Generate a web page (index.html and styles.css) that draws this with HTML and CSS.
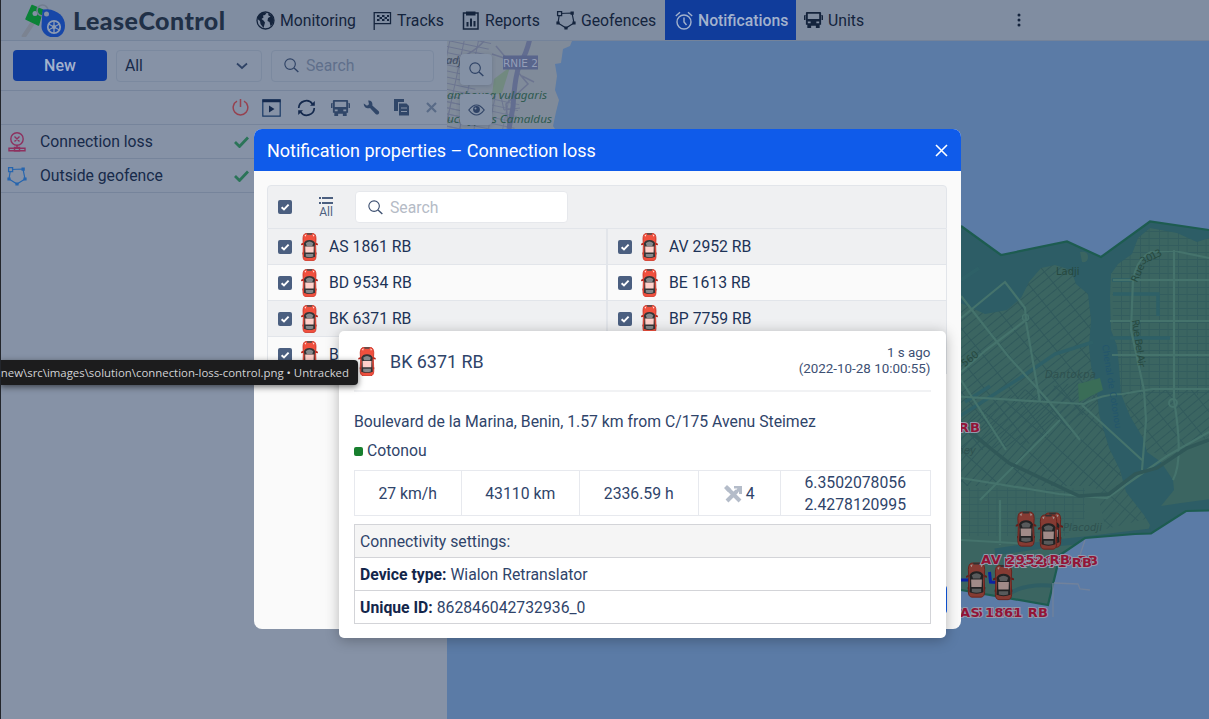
FILE: index.html
```html
<!DOCTYPE html>
<html lang="en">
<head>
<meta charset="utf-8">
<title>LeaseControl</title>
<link rel="stylesheet" href="styles.css">
</head>
<body>
<svg class="defs" width="0" height="0">
  <defs>
    <symbol id="car" viewBox="0 0 18 30">
      <path d="M0 11.5l3-1.5v2.500l-3 .5zM18 11.500l-3-1.500v2.500l3 .5z" fill="#b3261d"/>
      <path d="M1.500 21h15v2h-15z" fill="#8a2019"/>
      <path d="M2 6Q2.200 .8 5 .5h8Q15.800 .8 16 6l-.4 7L16 25q-.2 4.500-3 4.700H5Q2.200 29.500 2 25l.4-12z" fill="#f0503e" stroke="#c5281b" stroke-width=".8"/>
      <path d="M6 .3h6l-.6 1.500H6.600z" fill="#4b4b4b"/>
      <path d="M3.600 2.500l2-1-.6 2.500zM14.400 2.500l-2-1 .6 2.500z" fill="#ffd9d3"/>
      <path d="M3 11q1.500-3.500 6-3.500T15 11l-.6 4.500.6 10q-6 2.500-12 0l.6-10z" fill="#333436"/>
      <path d="M5 11q4-3.600 8 0l-1 2.800H6z" fill="#85888b"/>
      <path d="M4.400 14.500h9.200l-.2 6.500H4.600z" fill="#ffd0ca"/>
      <path d="M5 22.500h8v2.800q-4 1.300-8 0z" fill="#85888b"/>
    </symbol>
    <symbol id="check" viewBox="0 0 14 14">
      <rect width="14" height="14" rx="2" fill="#4b5f80"/>
      <path d="M3.600 7.200l2.400 2.300 4.600-4.800" fill="none" stroke="#fff" stroke-width="1.900"/>
    </symbol>
    <symbol id="search" viewBox="0 0 16 16">
      <circle cx="6.500" cy="6.500" r="5.600" fill="none" stroke="currentColor" stroke-width="1.200"/>
      <path d="M10.700 10.700l4.600 4.300" stroke="currentColor" stroke-width="1.400"/>
    </symbol>
    <symbol id="bus" viewBox="0 0 20 18">
      <path fill-rule="evenodd" fill="currentColor" d="M3 .5h14q1 0 1 1V4h2v5h-1.500V4.500H18V14h-1.500v3.500h-4V15h-5v2.500h-4V14H2V4.500h-.5V9H0V4h2V1.500q0-1 1-1zM4 2.500V8h12V2.500zM4 10.500v2h3v-2zM13 10.500v2h3v-2z"/>
    </symbol>
    <symbol id="fence" viewBox="0 0 20 20">
      <path d="M3.500 3.500L16 3l2 10-8 5-8-5z" fill="none" stroke="currentColor" stroke-width="1.200"/>
      <path d="M14.500 1.500h3.300v3.300h-3.300zM16.400 11.400h3.200v3.200h-3.200zM8.400 16.400h3.200v3.200H8.400zM.4 11.400h3.200v3.200H.4z" fill="currentColor"/>
      <path d="M1.600 1.600h4v4h-4z" class="fence-knot" stroke="currentColor" stroke-width="1.300"/>
    </symbol>
    <symbol id="tick" viewBox="0 0 15 12">
      <path d="M1 6l4.500 4.500L14 1.500" fill="none" stroke="#2b7458" stroke-width="2.800"/>
    </symbol>
  </defs>
</svg>

<div class="app">
  <header class="topbar">
    <div class="brand">
      <svg class="brand-mark" width="46" height="34" viewBox="20 2 46 34">
        <path d="M34 20L24 35" stroke="#7b8391" stroke-width="4.500" stroke-linecap="round"/>
        <path d="M32 4.500l10.500 4.500-4 15L26 18z" fill="#0b8237" stroke="#0b8237" stroke-width="1.500" stroke-linejoin="round"/>
        <circle cx="35" cy="12.500" r="2.500" fill="#8390a4"/>
        <circle cx="42.500" cy="9.500" r="5.500" fill="none" stroke="#727d90" stroke-width="1.500"/>
        <path d="M42.500 8.500l5-.2c10 1 17.500 7 17.500 16.200 0 8-5.500 12-11 12-7 0-12.500-5-12.500-11z" fill="#1747a8"/>
        <circle cx="46.500" cy="13" r="2.500" fill="#8390a4"/>
        <circle cx="54" cy="26" r="6.200" fill="none" stroke="#8d9bb2" stroke-width="1.800"/>
        <path d="M54 20v12M48.500 23l11 6M48.500 29l11-6" stroke="#8d9bb2" stroke-width="1.300"/>
        <circle cx="54" cy="26" r="2" fill="#8d9bb2"/>
      </svg>
      <span class="brand-name">LeaseControl</span>
    </div>
    <nav class="nav">
      <a class="nav-item"><svg width="19" height="19" viewBox="0 0 19 19"><circle cx="9.500" cy="9.500" r="8.500" fill="none" stroke="currentColor" stroke-width="1.300"/><path d="M2 5l4-3.500 4.500.5-1.500 2-2 .5.500 2-2 1.500 2 1.500 1.500 2-1.500 5.500-3-4-.5-3L1.500 8zM12 2l4 2.500 2 4.500-1.500 4.500-2 1.500-1-4-2-1 .5-3 2.500-1.500-2-1z" fill="currentColor"/></svg>Monitoring</a>
      <a class="nav-item"><svg width="19" height="19" viewBox="0 0 19 19"><path d="M1.200 1v18M1 1.600h16.500v11H1" fill="none" stroke="currentColor" stroke-width="1.300"/><path d="M4 4h2.500v2H4zM9 4h2.500v2H9zM14 4h2v2h-2zM6.500 6H9v2H6.500zM11.500 6H14v2h-2.500zM4 8h2.500v2H4zM9 8h2.500v2H9zM14 8h2v2h-2z" fill="currentColor"/></svg>Tracks</a>
      <a class="nav-item"><svg width="18" height="19" viewBox="0 0 18 19"><path d="M1.500 2h14.500v16H1.500z" fill="none" stroke="currentColor" stroke-width="1.500"/><path d="M4 .5h9.500v4H4zM4.500 11h2v4.500h-2zM8 7.500h2v8H8zM11.500 10h2v5.500h-2z" fill="currentColor"/></svg>Reports</a>
      <a class="nav-item"><svg width="20" height="20"><use href="#fence"/></svg>Geofences</a>
      <a class="nav-item nav-item-active"><svg width="18" height="19" viewBox="0 0 18 19" fill="none" stroke="currentColor" stroke-width="1.400"><circle cx="9" cy="11" r="7"/><path d="M9 6.500V11l2.500 3M.8 5L5 1.200M17.200 5L13 1.200"/></svg>Notifications</a>
      <a class="nav-item nav-item-units"><svg width="19" height="18"><use href="#bus"/></svg>Units</a>
    </nav>
    <svg class="more" width="4" height="14" viewBox="0 0 4 14" fill="#14243d"><circle cx="2" cy="2" r="1.500"/><circle cx="2" cy="7" r="1.500"/><circle cx="2" cy="12" r="1.500"/></svg>
  </header>

  <main class="main">
    <aside class="sidebar">
      <div class="filters">
        <button class="btn-new">New</button>
        <div class="select">All<svg width="12" height="8" viewBox="0 0 12 8"><path d="M1 1.500l5 4.500 5-4.500" fill="none" stroke="#2e4265" stroke-width="1.700"/></svg></div>
        <div class="search search-dim"><svg width="15" height="15"><use href="#search"/></svg>Search</div>
      </div>
      <div class="tools">
        <svg width="17" height="17" viewBox="0 0 17 17" fill="none" stroke="#96414f" stroke-width="1.500"><path d="M5 2.200a7.300 7.300 0 1 0 7 0M8.500 0v8"/></svg>
        <svg width="19" height="18" viewBox="0 0 19 18"><path d="M.8.800h17.400v16.400H.800z" fill="none" stroke="#1a3a66" stroke-width="1.200"/><path d="M.5.500h18v2.700H.5zM7 6.500l5.500 3.500L7 13.500z" fill="#14294d"/></svg>
        <svg width="19" height="18" viewBox="0 0 19 18"><path d="M1.700 9A7.600 7.600 0 0 1 15.500 5M17.300 9A7.600 7.600 0 0 1 3.500 13" fill="none" stroke="#14294d" stroke-width="1.700"/><path d="M17.800 2v4.800H13zM1.200 16v-4.800H6z" fill="#14294d"/></svg>
        <svg width="19" height="18" color="#304668"><use href="#bus"/></svg>
        <svg width="17" height="17" viewBox="0 0 17 17"><path d="M.8 4.500L4 6.800l2-1.500L5.200 1.500C8 1 10 3.500 9.300 6.500l6.200 5.500c2 2-.9 4.900-2.900 2.900L7 9C4 10 .5 8 .8 4.500z" fill="#304668"/></svg>
        <svg width="16" height="17" viewBox="0 0 16 17"><path d="M0 0h10v3H4v9H0z" fill="#304668"/><path d="M5 4.500h7.500l2.500 2.500v9.500H5z" fill="#304668"/><path d="M7 9h6M7 12.500h6" stroke="#8692a6"/></svg>
        <svg width="11" height="11" viewBox="0 0 11 11"><path d="M1 1l9 9M10 1l-9 9" stroke="#596b87" stroke-width="2.200"/></svg>
      </div>
      <div class="notice"><svg width="18" height="20" viewBox="0 0 18 20" fill="none" stroke="#8d315f" stroke-width="1.400"><circle cx="9" cy="7" r="6.200"/><path d="M6.500 4.500l5 5M11.500 4.500l-5 5M9 13v3M1 16.200h16v2.600H1zM6.500 15.500h5v3.500h-5z"/></svg><span>Connection loss</span><svg width="15" height="12"><use href="#tick"/></svg></div>
      <div class="notice"><svg width="20" height="20" color="#2665ae"><use href="#fence"/></svg><span>Outside geofence</span><svg width="15" height="12"><use href="#tick"/></svg></div>
    </aside>

    <section class="map">
      <svg class="map-canvas" width="762" height="678" viewBox="447 41 762 678">
        <defs>
          <pattern id="blocksA" width="20" height="7" patternUnits="userSpaceOnUse" patternTransform="rotate(-39)"><path d="M0 .5h20M.5 0v7" stroke="#30595b" stroke-width="1.100"/></pattern>
          <pattern id="blocksB" width="19" height="7" patternUnits="userSpaceOnUse"><path d="M0 .5h19M.5 0v7M9 0v7" stroke="#325c5d" stroke-width=".9"/></pattern>
          <pattern id="blocksC" width="22" height="7" patternUnits="userSpaceOnUse" patternTransform="rotate(-48)"><path d="M0 .5h22M.5 0v7" stroke="#30595b" stroke-width="1.100"/></pattern>
          <pattern id="blocksD" width="14" height="6" patternUnits="userSpaceOnUse" patternTransform="rotate(12)"><path d="M0 .5h14M.5 0v6" stroke="#6c7590" stroke-width="1.100"/></pattern>
          <clipPath id="zone"><path d="M940 210L961 226l40 29 66-13.500 34 15.500 49-35.500 59 8.500v280.500l-23 .5-35 22.500-16 .5-50 4-25 17-12 50-87-15-40-7z"/></clipPath>
        </defs>
        <rect x="447" y="41" width="762" height="678" fill="#5b7ba6"/>
        <path d="M447 41h125l-2 5-7 3-2 14-6 1 2 12-2 14 4 10-3 12-3 14 4 6H447z" fill="#808b9a"/>
        <path d="M447 41h45l-10 25-20 70h-15z" fill="url(#blocksD)"/>
        <path d="M447 96h74l-8 40h-66z" fill="url(#blocksD)" opacity=".8"/>
        <path d="M508 70l-8 22 4 18 16-2" fill="none" stroke="#6c7590"/>
        <path d="M494 79l16-12-8 26-10 2z" fill="#71897f"/>
        <path d="M484 41c-10 12-25 18-37 22M492 54l18 6 18-2M496 46l32 38-22 20 3 30M522 76l12 6" fill="none" stroke="#6c7590" stroke-width="1.500"/>
        <path d="M530 38q-3 14-9 24t-8 45l-4 22" fill="none" stroke="#626d90" stroke-width="5"/>
        <rect x="503" y="55.500" width="35" height="14" fill="#59658c"/>
        <text x="520.500" y="66.500" text-anchor="middle" class="road-badge">RNIE 2</text>
        <g class="place-green"><text x="447" y="99" textLength="100" lengthAdjust="spacingAndGlyphs">ambousa vulagaris</text><text x="447" y="123" textLength="105" lengthAdjust="spacingAndGlyphs">uca yptus Camaldus</text></g>
        <text x="446" y="64" class="place-dark">adje</text>

        <g clip-path="url(#zone)">
          <rect x="930" y="200" width="279" height="420" fill="#3b6561"/>
          <path d="M940 390V290l66-12 30-20 40-5 18 30v100l10 20-70 40-74 10z" fill="url(#blocksA)"/>
          <path d="M961 420l60-30 76-10 22 50 10 40-20 16H961z" fill="url(#blocksC)"/>
          <path d="M1112 262l22-35 16-8 59 16v160h-95z" fill="url(#blocksB)"/>
          <path d="M1122 390h87v46l-34 20-38-6z" fill="url(#blocksA)" opacity=".9"/>
          <path d="M955 488h130v30l-20 18h-110z" fill="url(#blocksB)" opacity=".8"/>
          <path d="M1095 485h45l14 32-48 12z" fill="url(#blocksC)" opacity=".8"/>
          <path d="M940 200h269v38l-12 4-20-9-27-5-12 10-6 16-14 10-7 10-1 22 1 34 6 16 2 20 2 28 9 22 13 22 4 14 14 10 12 18 1 10-13 16 20-3 29-4v14h-24l-30 24h-10l4-12-6-10-18-23-6-22-11-22-10-34-2-24-6-24-2-20 2-26-3-26-12-10-5-14-16-5-14 3-12 14-8 16-14 12-22 4-24-11-16-7z" fill="#2d5d66"/>
          <path d="M1080 252q8-1 8 5t-6 5z" fill="#3b6561"/>
          <path d="M961 280l18-12M960 416l60-38 35-24 38-12M1113 294h45v22M1110 338h60M965 402l25-16M1112 280h20" fill="none" stroke="#2e6067" stroke-width="3.500"/>
          <path d="M1078 384l22-6 3 12-24 12z" fill="#3a6d57"/>
          <path d="M995 552l60-9 30-3 66-8" fill="none" stroke="#2d5d66" stroke-width="7"/>
          <path d="M1000 600q20-18 55-14" fill="none" stroke="#2f5e64" stroke-width="4"/>
          <g fill="none" stroke="#45736c" stroke-width="2.200">
            <path d="M961 296l47 60 38 42 34 42M961 318l44-36 20 26 1 12-40 30-25 22M1026 322l14 80M950 396l98 6 36 2q18-10 38-10l30-5h57M961 380l45 70M961 478l98 16 48 4 60-42 42-24M1174 250v150q10 60-1 80M1131 330l13 60 2 30-4 50M1131 330l2-50q4-22 18-28l24-1 34 7M1110 321h99M1112 355h97M1113 280h96M1000 500v45M961 540l70 4M1142 460l-60-55M980 500l80-80"/>
          </g>
          <path d="M961 425l48 38 70 33 30-2 26-20 22-6 30-20 22-8" fill="none" stroke="#305858" stroke-width="3.500"/>
          <circle cx="1173" cy="403" r="4" fill="none" stroke="#45736c" stroke-width="2"/>
          <circle cx="1025.500" cy="317.500" r="3" fill="none" stroke="#45736c" stroke-width="1.500"/>
          <g class="place">
            <text x="1056" y="275">Ladji</text>
            <text x="1137" y="283" transform="rotate(-66 1137 283)">Rue</text>
            <text x="1142" y="265" transform="rotate(-26 1142 265)" textLength="23">3.013</text>
            <text x="1132" y="320" transform="rotate(82 1132 320)" textLength="48">Rue Bel Air</text>
            <text x="1102" y="345" transform="rotate(81 1102 345)" textLength="85" class="place-water">Chenal de Cotonou</text>
            <text x="1045" y="378" textLength="51" class="place-it">Dantokpa</text>
            <text x="1063" y="531" textLength="39" class="place-it">Placodji</text>
            <text x="947" y="381" transform="rotate(-38 947 381)">Rue 560</text>
            <text x="954" y="454" class="place-it">mey</text>
          </g>
        </g>
        <path d="M961 226l40 29 66-13.500 34 15.500 49-35.500 59 8.500M1209 510.500l-23 .5-35 22.500-16 .5-50 4-25 17-12 50-87-15" fill="none" stroke="#1d5c50" stroke-width="2.200"/>
        <path d="M1085 540l-5 15M1054 583l24 1 2 5 10 1M1053 583v34" fill="none" stroke="#71829c" stroke-width="1.300"/>
        <path d="M960 580h10M989.500 572l1 10 7 .5" fill="none" stroke="#0b23a0" stroke-width="3"/>
        <g class="fleet">
          <use href="#car" x="1042" y="511" width="21" height="38"/>
          <use href="#car" x="1015.500" y="510.500" width="21" height="37"/>
          <use href="#car" x="1038" y="513.500" width="21" height="37"/>
          <use href="#car" x="966" y="561.500" width="21" height="37"/>
          <use href="#car" x="993" y="564" width="21" height="37"/>
        </g>
        <g class="plates">
          <text x="932" y="432" textLength="48">95 RB</text>
          <text x="1010" y="565" textLength="88">BE 1613 RB</text>
          <text x="1004" y="567" textLength="88">BK 6371 RB</text>
          <text x="981" y="564" textLength="89">AV 2952 RB</text>
          <text x="940" y="617" textLength="80">BB 5171</text>
          <text x="960" y="617" textLength="88">AS 1861 RB</text>
        </g>
      </svg>
      <div class="map-tools">
        <button class="map-btn"><svg width="15" height="15"><use href="#search"/></svg></button>
        <button class="map-btn"><svg width="17" height="12" viewBox="0 0 17 12"><path d="M.8 6Q8.500-4 16.200 6 8.500 16 .8 6z" fill="none" stroke="#2e4265" stroke-width="1.200"/><circle cx="8.500" cy="5.500" r="3.400" fill="#2e4265"/><circle cx="7.500" cy="4.500" r="1" fill="#8390a5"/></svg></button>
      </div>
    </section>
  </main>

  <div class="modal">
    <div class="modal-head"><span>Notification properties – Connection loss</span><svg width="13" height="13" viewBox="0 0 13 13"><path d="M1 1l11 11M12 1L1 12" stroke="#fff" stroke-width="1.600"/></svg></div>
    <div class="modal-body">
      <div class="unit-bar">
        <svg width="14" height="14"><use href="#check"/></svg>
        <div class="all-toggle"><svg width="14" height="8" viewBox="0 0 14 8"><path d="M0 1h2M3 1h11M0 6h2M3 6h11" stroke="#4b5f80" stroke-width="2"/></svg>All</div>
        <div class="search search-light"><svg width="15" height="15"><use href="#search"/></svg>Search</div>
      </div>
      <div class="units">
        <div class="unit"><svg width="14" height="14"><use href="#check"/></svg><svg width="17" height="28"><use href="#car"/></svg>AS 1861 RB</div>
        <div class="unit"><svg width="14" height="14"><use href="#check"/></svg><svg width="17" height="28"><use href="#car"/></svg>AV 2952 RB</div>
        <div class="unit unit-alt"><svg width="14" height="14"><use href="#check"/></svg><svg width="17" height="28"><use href="#car"/></svg>BD 9534 RB</div>
        <div class="unit unit-alt"><svg width="14" height="14"><use href="#check"/></svg><svg width="17" height="28"><use href="#car"/></svg>BE 1613 RB</div>
        <div class="unit"><svg width="14" height="14"><use href="#check"/></svg><svg width="17" height="28"><use href="#car"/></svg>BK 6371 RB</div>
        <div class="unit"><svg width="14" height="14"><use href="#check"/></svg><svg width="17" height="28"><use href="#car"/></svg>BP 7759 RB</div>
        <div class="unit unit-alt"><svg width="14" height="14"><use href="#check"/></svg><svg width="17" height="28"><use href="#car"/></svg>B</div>
        <div class="unit unit-alt"></div>
      </div>
      <div class="modal-foot"><div class="btn-next"></div></div>
    </div>
  </div>

  <div class="card">
    <div class="card-head">
      <svg width="18" height="29"><use href="#car"/></svg>
      <span class="card-title">BK 6371 RB</span>
      <div class="card-time">1 s ago<br>(2022-10-28 10:00:55)</div>
    </div>
    <div class="address">Boulevard de la Marina, Benin, 1.57 km from C/175 Avenu Steimez</div>
    <div class="zone"><i class="zone-dot"></i>Cotonou</div>
    <div class="stats">
      <div class="stat">27 km/h</div>
      <div class="stat">43110 km</div>
      <div class="stat">2336.59 h</div>
      <div class="stat"><svg width="19" height="19" viewBox="0 0 19 19"><path d="M3 3l13 13M13 6L3 16" stroke="#b4bcc9" stroke-width="4"/><path d="M0 3l3-3 4 4-3 3zM10 1h8v8h-3V6.500l-2 1.500-2-2 2.500-2.500H10z" fill="#b4bcc9"/></svg>4</div>
      <div class="stat">6.3502078056<br>2.4278120995</div>
    </div>
    <div class="settings">
      <div class="setting setting-head">Connectivity settings:</div>
      <div class="setting"><b>Device type:</b> Wialon Retranslator</div>
      <div class="setting"><b>Unique ID:</b> 862846042732936_0</div>
    </div>
  </div>

  <div class="path-tip">new\src\images\solution\connection-loss-control.png • Untracked</div>
</div>
</body>
</html>
```
FILE: styles.css
```css
* { box-sizing: border-box; }
body { margin: 0; font-family: Roboto, "Liberation Sans", sans-serif; font-size: 15.75px; }
svg { display: block; flex: none; }
.defs { position: absolute; }
.app { position: relative; width: 1209px; height: 719px; overflow: hidden; display: flex; flex-direction: column; border-left: 1px solid #23262c; }

.topbar { height: 41px; flex: none; display: flex; align-items: center; background: #808da1; border-bottom: 1px solid #74839a; color: #14243d; }
.brand { width: 246px; display: flex; align-items: center; gap: 7px; padding-left: 19px; }
.brand-name { font: 900 25px Lato, sans-serif; color: #203047; letter-spacing: .45px; white-space: nowrap; }
.nav { display: grid; grid-template-columns: 117px 89px 94px 118px 131px 80px; height: 40px; }
.nav-item { display: flex; align-items: center; gap: 5px; padding-left: 9px; white-space: nowrap; }
.nav-item-active { background: #103c9b; color: #a3b2cd; font-weight: 500; padding-left: 10px; }
.nav-item-units { padding-left: 8px; }
.fence-knot { fill: #8390a4; }
.more { margin-left: 141px; }

.main { flex: 1; display: flex; min-height: 0; }
.sidebar { width: 446px; flex: none; background: #8692a6; color: #172a4a; }
.filters { height: 50px; display: flex; align-items: center; gap: 9px; padding: 0 12px; border-bottom: 1px solid #76849b; }
.btn-new { width: 94px; height: 31px; border: 0; border-radius: 4px; background: #103c9b; color: #a3b2cd; font: 500 16px Roboto, sans-serif; padding: 0; }
.select { width: 146px; height: 32px; border: 1px solid #7b899f; border-radius: 4px; display: flex; align-items: center; justify-content: space-between; padding: 0 13px 0 8px; }
.search { display: flex; align-items: center; border-radius: 4px; }
.search-dim { width: 163px; height: 32px; border: 1px solid #7b899f; padding-left: 12px; gap: 7px; color: #5f6f8b; }
.search-dim svg { color: #2e4265; }
.tools { height: 34px; display: grid; grid-template-columns: 33px 29px 40px 29px 32px 29px 30px; justify-items: center; align-items: center; padding-left: 223px; border-bottom: 1px solid #76849b; }
.notice { height: 34px; display: flex; align-items: center; border-bottom: 1px solid #76849b; padding-left: 6px; }
.notice svg:first-child { width: 20px; }
.notice span { margin-left: 13px; width: 194px; }

.map { position: relative; flex: 1; overflow: hidden; }
.map-tools { position: absolute; left: 13px; top: 13px; display: flex; flex-direction: column; gap: 9px; }
.map-btn { width: 32px; height: 31px; border: 0; border-radius: 4px; background: #8491a5; color: #2e4265; display: flex; align-items: center; justify-content: center; padding: 0; box-shadow: 0 1px 4px rgba(20, 40, 80, .2); }
.road-badge { font: 10.500px "DejaVu Sans", sans-serif; fill: #949eb8; }
.place-green { font: italic 11.500px "Noto Sans", sans-serif; fill: #2f5b50; }
.place-dark { font: italic 11px "Noto Sans", sans-serif; fill: #414e60; }
.place { font: 10px "DejaVu Sans", sans-serif; fill: #26493f; }
.place-it { font-style: italic; fill: #2e514f; }
.place-water { font-size: 9px; fill: #23566c; }
.fleet { filter: brightness(.66) saturate(.7); }
.plates { font: bold 13px "DejaVu Sans", sans-serif; fill: #921436; stroke: #9299ab; stroke-width: 2px; paint-order: stroke; }

.modal { position: absolute; left: 253px; top: 129px; width: 706.5px; height: 500px; border-radius: 8px; overflow: hidden; background: #fafafa; display: flex; flex-direction: column; color: #1d3357; }
.modal-head { height: 42px; flex: none; background: #0f5bea; color: #fff; display: flex; align-items: center; justify-content: space-between; padding: 0 13px; font-size: 18px; }
.modal-body { flex: 1; padding: 14px 14px 15px 13px; display: flex; flex-direction: column; }
.unit-bar { height: 43.5px; flex: none; background: #eff0f2; border: 1px solid #e2e5ea; border-radius: 4px 4px 0 0; display: flex; align-items: center; padding: 1px 0 0 10px; }
.all-toggle { margin-left: 24px; width: 20px; display: flex; flex-direction: column; align-items: center; gap: 1px; font-size: 12px; line-height: 12px; color: #4b5f80; }
.search-light { margin-left: 19px; width: 213px; height: 32px; border: 1px solid #e6e8ec; background: #fff; color: #b5bbc6; padding-left: 12px; gap: 7px; }
.search-light svg { color: #3c4f70; }
.units { display: grid; grid-template-columns: 340px 1fr; border: 1px solid #e2e5ea; border-top: 0; }
.unit { height: 36px; display: flex; align-items: center; background: #eff0f2; border-bottom: 1px solid #e2e5ea; padding: 1px 0 0 10px; white-space: nowrap; }
.unit:nth-child(odd) { border-right: 2px solid #e2e5ea; }
.unit-alt { background: #fafafa; }
.unit svg:first-child { margin-right: 9px; }
.unit svg:nth-child(2) { margin-right: 11px; }
.modal-foot { margin-top: auto; display: flex; justify-content: flex-end; }
.btn-next { width: 90px; height: 29px; border-radius: 4px; background: #0f5bea; }

.card { position: absolute; left: 338px; top: 331px; width: 606.5px; height: 306.5px; background: #fff; border-radius: 5px; box-shadow: 0 2px 14px rgba(0, 0, 0, .28); padding: 0 15px; color: #2f446a; display: flex; flex-direction: column; }
.card-head { height: 61px; flex: none; border-bottom: 2px solid #f1f2f4; display: flex; align-items: center; padding: 1px 0 0 4px; }
.card-title { margin-left: 14px; font-size: 17.900px; }
.card-time { margin-left: auto; text-align: right; font-size: 13.400px; line-height: 16px; color: #3d5073; }
.address { margin-top: 20px; line-height: 20px; }
.zone { margin-top: 9px; line-height: 20px; display: flex; align-items: center; gap: 4px; }
.zone-dot { width: 9px; height: 9px; border-radius: 2px; background: #187f2e; margin-top: 1px; }
.stats { margin-top: 9px; height: 46px; display: grid; grid-template-columns: 106.500px 118.500px 118.500px 82.500px 1fr; border: 1px solid #e7e9ee; }
.stat { display: flex; align-items: center; justify-content: center; gap: 3px; line-height: 22px; border-right: 1px solid #e7e9ee; padding-top: 1px; }
.stat:last-child { border-right: 0; }
.settings { margin-top: 8px; border: 1px solid #d3d4d8; }
.setting { height: 33px; line-height: 33px; padding-left: 5px; border-bottom: 1px solid #d3d4d8; }
.setting:last-child { height: 32px; border-bottom: 0; }
.setting-head { background: #f5f5f5; }
.setting b { color: #13264b; font-weight: 700; }

.path-tip { position: absolute; left: -1px; top: 360px; width: 358px; height: 25px; border-radius: 0 4px 4px 0; background: #1c1c1d; color: #d2d3d5; font: 11.400px/25px "Open Sans", "Noto Sans", sans-serif; display: flex; justify-content: flex-end; padding-right: 9px; white-space: nowrap; overflow: hidden; box-shadow: 0 2px 6px rgba(0, 0, 0, .55); }
```
